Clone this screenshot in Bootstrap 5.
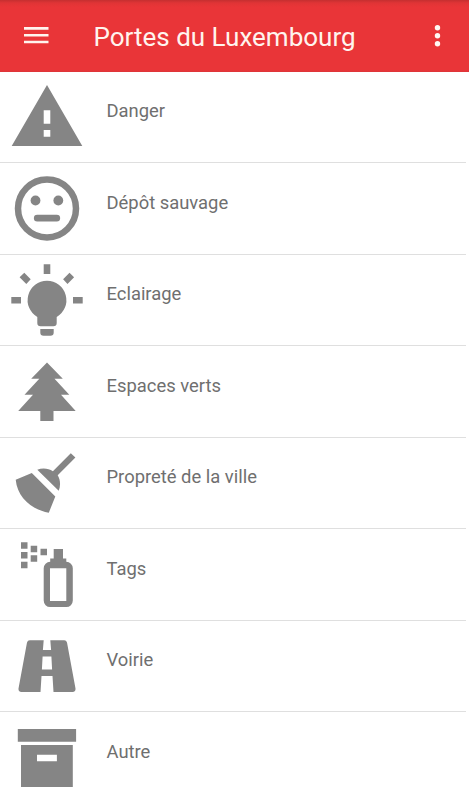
<!DOCTYPE html>
<html lang="fr">
<head>
<meta charset="utf-8">
<meta name="viewport" content="width=device-width, initial-scale=1">
<title>Portes du Luxembourg</title>
<link href="https://cdn.jsdelivr.net/npm/bootstrap@5.3.0/dist/css/bootstrap.min.css" rel="stylesheet">
<style>
body{font-family:Roboto,sans-serif;height:800px;overflow:hidden;background:#fff}
.topbar{height:72px;background:linear-gradient(#c52f30 0,#e03436 3px,#e93538 7px,#e93538 70px,#dc3539 72px)}
.topbar .btn{width:48px;height:48px;border:0}
.menu-btn{margin-left:13px}
.more-btn{margin-right:7px}
.title{font-size:26px;line-height:30px;color:#fff4ee;width:264px;margin-left:32.500px;padding-top:1px;white-space:nowrap}
.issues{width:466px}
.issue{height:92px;border-bottom:1px solid #dfdfdf;color:#6f6f6f;font-size:18.400px}
.issue:nth-child(odd){height:91px}
.issue svg{width:94px;height:90px;fill:#858585;flex:none}
.issue .label-text{margin-left:12.500px;margin-top:27px;line-height:24px}
.issue:nth-child(even) .label-text{margin-top:28px}
.issue:last-child{border-bottom:0;height:88px}
</style>
<script defer src="https://cdn.jsdelivr.net/npm/bootstrap@5.3.0/dist/js/bootstrap.bundle.min.js"></script>
</head>
<body>
<header class="topbar d-flex align-items-center">
  <button class="btn menu-btn p-0 d-flex align-items-center justify-content-center" type="button" aria-label="Menu">
    <svg width="26" height="20" viewBox="0 0 26 20" fill="#fff4ee"><path d="M0 1h24.500v2.700H0zM0 8h24.500v2.600H0zM0 14.700h24.500v2.500H0z"/></svg>
  </button>
  <h1 class="title mb-0 fw-normal">Portes du Luxembourg</h1>
  <button class="btn more-btn p-0 ms-auto d-flex align-items-center justify-content-center" type="button" aria-label="Options">
    <svg width="8" height="22" viewBox="0 0 8 22" fill="#fff8f4"><circle cx="3.500" cy="2.700" r="2.700"/><circle cx="3.500" cy="10.700" r="2.700"/><circle cx="3.500" cy="18.700" r="2.700"/></svg>
  </button>
</header>
<ul class="issues list-unstyled mb-0">
  <li class="issue d-flex">
    <svg viewBox="0 72 94 90"><path fill-rule="evenodd" d="M47 85 82.300 146H11.700zM43.700 110.300v13.400h6.600v-13.400zM43.700 130v6.700h6.600V130z"/></svg>
    <span class="label-text">Danger</span>
  </li>
  <li class="issue d-flex">
    <svg viewBox="0 163 94 90"><circle cx="47" cy="208.500" r="29" fill="none" stroke="#858585" stroke-width="6.500"/><circle cx="35.500" cy="200.500" r="4.900"/><circle cx="58.300" cy="200.500" r="4.900"/><rect x="33.900" y="214.800" width="26.200" height="6.700" rx="3.300"/></svg>
    <span class="label-text">Dépôt sauvage</span>
  </li>
  <li class="issue d-flex">
    <svg viewBox="0 255 94 90"><path d="M43.700 264.300h6.600v9.700h-6.600zM11.300 297h9.700v6.500h-9.700zM73 297h9.700v6.500H73zM24.300 272.800l6.400 6.500-4.400 4.700-6.700-6.700zM69.500 272.800l4.600 4.500-6.600 6.700-4.400-4.700zM47 280.800a19.400 19.400 0 0 1 9.700 36.200v6a3.300 3.300 0 0 1-3.300 3.300H40.600a3.300 3.300 0 0 1-3.300-3.300v-6A19.400 19.400 0 0 1 47 280.800zM40.300 329h13.400v3.500a3.300 3.300 0 0 1-3.300 3.300h-6.800a3.300 3.300 0 0 1-3.300-3.300z"/></svg>
    <span class="label-text">Eclairage</span>
  </li>
  <li class="issue d-flex">
    <svg viewBox="0 346 94 90"><path d="M47 362.500 62.800 378.800H54.500L69.300 394.800H61L75.700 411H53.500v10H40.300v-10H18.200L33 394.800H24.500L39.300 378.800H31.200z"/></svg>
    <span class="label-text">Espaces verts</span>
  </li>
  <li class="issue d-flex">
    <svg viewBox="0 438 94 90"><path d="M70.800 453.300 75.400 457.500 57.700 475.300C60.300 479.500 60.900 485.300 58.700 490.800L37.300 469.700C42.300 467.700 48.500 468.200 52.900 471.200zM31.800 473 55.300 496.500 48.800 512.700C31 509.500 17.500 497.300 15.700 479.800z"/></svg>
    <span class="label-text">Propreté de la ville</span>
  </li>
  <li class="issue d-flex">
    <svg viewBox="0 529 94 90"><path d="M21 542.300h6.500v6.500H21zM21 552h6.500v6.500H21zM21 561.700h6.500v6.500H21zM30.700 545.700h6.500v6.500h-6.500zM30.700 555.300h6.500v6.500h-6.500zM40.500 548.800H47v6.500h-6.500z"/><path fill-rule="evenodd" d="M53.700 549H63v9.500h3.300v3.300a6.500 6.500 0 0 1 6.500 6.500v32.300a6.500 6.500 0 0 1-6.500 6.500H50.200a6.500 6.500 0 0 1-6.500-6.500v-32.300a6.500 6.500 0 0 1 6.500-6.500v-3.300h3.500zM50 568.200V601h16.300v-32.800z"/></svg>
    <span class="label-text">Tags</span>
  </li>
  <li class="issue d-flex">
    <svg viewBox="0 621 94 90"><path fill-rule="evenodd" d="M29.800 640.300H43.700L42.900 650H51.100L50.300 640.300H64.200A3 3 0 0 1 67 642.500L75.500 688.500A3.200 3.200 0 0 1 72.500 692H53.500L52.500 676H41.500L40.500 692H21.500A3.200 3.200 0 0 1 18.500 688.500L27 642.500A3 3 0 0 1 29.800 640.300zM42.600 656.500 41.900 669.500H52.100L51.400 656.500z"/></svg>
    <span class="label-text">Voirie</span>
  </li>
  <li class="issue d-flex">
    <svg viewBox="0 712 94 90"><path fill-rule="evenodd" d="M17.800 729h58.300v12.700H17.800zM21 745h51.800v42H21zM37 754.700v6.600h19.900v-6.600z"/></svg>
    <span class="label-text">Autre</span>
  </li>
</ul>
</body>
</html>
